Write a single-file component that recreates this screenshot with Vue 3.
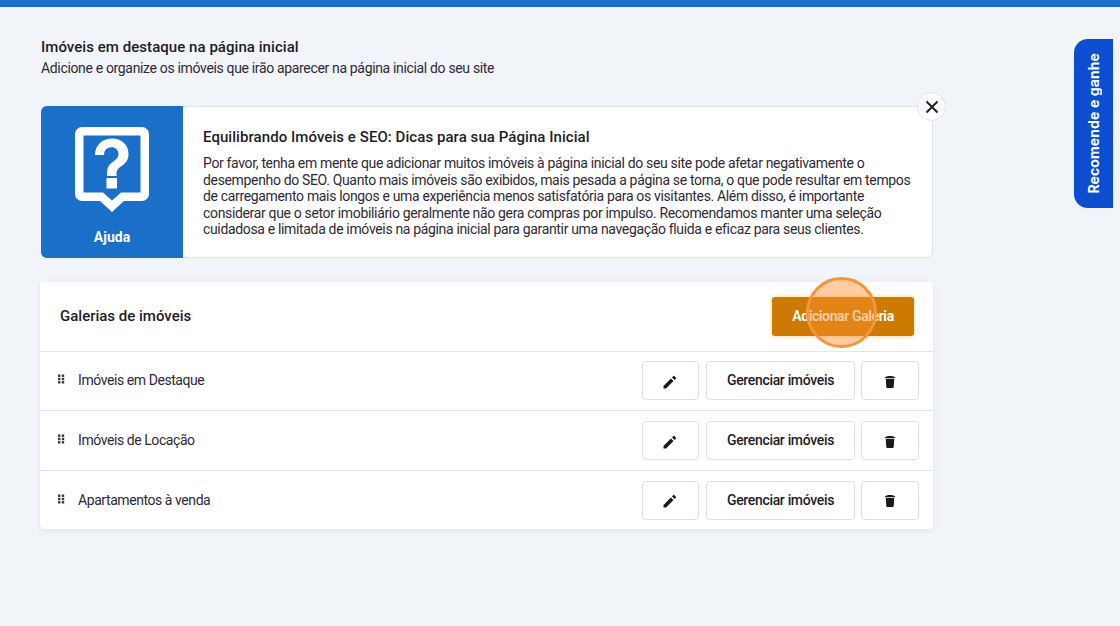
<template>
  <div class="page">
    <div class="topbar"></div>
    <main class="content">
      <h1 class="title">Imóveis em destaque na página inicial</h1>
      <p class="subtitle">Adicione e organize os imóveis que irão aparecer na página inicial do seu site</p>

      <section class="help">
        <div class="help-side">
          <svg class="help-icon" width="74" height="86" viewBox="0 0 74 86">
            <path fill="#fff" fill-rule="evenodd" d="M7 0h60a7 7 0 0 1 7 7v60a7 7 0 0 1-7 7H49L37 85 25 74H7a7 7 0 0 1-7-7V7a7 7 0 0 1 7-7zM8.500 8.500v57h19.500L37 73.500 46 65.500h19.500v-57z"/>
            <path fill="#fff" d="M20 28c0-10 7.500-16.500 17-16.500S53.500 17.500 53.500 27c0 6-3 9.500-7.500 12.500-3.500 2.400-4.500 4-4.500 8v1.500h-9.500V46c0-5.500 2-8.500 6-11.300 3.500-2.400 5.500-4 5.500-7.400 0-4.300-3-7-7-7-4.500 0-7.300 3-7.500 7.700zM31.500 51H42v10.500H31.500z"/>
          </svg>
          <span class="help-label">Ajuda</span>
        </div>
        <div class="help-body">
          <h2 class="help-title">Equilibrando Imóveis e SEO: Dicas para sua Página Inicial</h2>
          <p class="help-text">Por favor, tenha em mente que adicionar muitos imóveis à página inicial do seu site pode afetar negativamente o desempenho do SEO. Quanto mais imóveis são exibidos, mais pesada a página se torna, o que pode resultar em tempos de carregamento mais longos e uma experiência menos satisfatória para os visitantes. Além disso, é importante considerar que o setor imobiliário geralmente não gera compras por impulso. Recomendamos manter uma seleção cuidadosa e limitada de imóveis na página inicial para garantir uma navegação fluida e eficaz para seus clientes.</p>
        </div>
        <button class="close" aria-label="Fechar">
          <svg width="14" height="14" viewBox="0 0 14 14"><path d="M1.500 1.500l11 11M12.500 1.500l-11 11" stroke="#221c26" stroke-width="2" fill="none"/></svg>
        </button>
      </section>

      <section class="galleries">
        <header class="galleries-head">
          <h2 class="galleries-title">Galerias de imóveis</h2>
          <button class="add">Adicionar Galeria</button>
          <span class="spot"></span>
        </header>
        <div v-for="item in galleries" :key="item" class="row">
          <svg class="grip" width="8" height="10" viewBox="0 0 8 10">
            <g fill="#3a3340">
              <rect x="1" y="0.500" width="2.400" height="2.400"/><rect x="4.800" y="0.500" width="2.400" height="2.400"/>
              <rect x="1" y="3.800" width="2.400" height="2.400"/><rect x="4.800" y="3.800" width="2.400" height="2.400"/>
              <rect x="1" y="7.100" width="2.400" height="2.400"/><rect x="4.800" y="7.100" width="2.400" height="2.400"/>
            </g>
          </svg>
          <span class="row-name">{{ item }}</span>
          <div class="actions">
            <button class="btn icon-btn" aria-label="Editar">
              <svg class="pencil" width="14" height="14" viewBox="0 0 14 14"><path fill="#1b1620" d="M0.500 10.900V13.500H3.100L10.500 6.100 7.900 3.500zM12.900 3.700a.7.7 0 0 0 0-1L11.300 1.100a.7.7 0 0 0-1 0L9 2.400 11.600 5z"/></svg>
            </button>
            <button class="btn manage">Gerenciar imóveis</button>
            <button class="btn icon-btn trash" aria-label="Excluir">
              <svg class="bin" width="10" height="12" viewBox="0 0 10 12"><path fill="#1b1620" d="M.8 3h8.400l-.5 8a1.100 1.100 0 0 1-1.100 1H2.400a1.100 1.100 0 0 1-1.100-1zM0 1.200C1.500.5 3 0 5 0s3.500.5 5 1.200V2.300H0z"/></svg>
            </button>
          </div>
        </div>
      </section>
    </main>
    <aside class="refer"><span>Recomende e ganhe</span></aside>
  </div>
</template>

<script setup>
const galleries = ['Imóveis em Destaque', 'Imóveis de Locação', 'Apartamentos à venda']
</script>

<style>
html, body { margin: 0; background: #f1f4f9; }
</style>

<style scoped>
.page {
  position: relative;
  height: 626px;
  overflow: hidden;
  background: #f1f4f9;
  font-family: Roboto, "Liberation Sans", sans-serif;
  color: #221c26;
}
.topbar { height: 7px; background: #1a6fc9; }
.content { width: 893px; padding: 31px 0 0 40px; }
.title { margin: 0 0 0 1px; font-size: 15px; line-height: 18px; font-weight: 500; letter-spacing: 0.05px; }
.subtitle { margin: 3px 0 0 1px; font-size: 14px; line-height: 18px; letter-spacing: -0.34px; color: #2f2935; }

.help {
  position: relative;
  display: flex;
  height: 152px;
  margin: 29px 0 0 1px;
  box-sizing: border-box;
  background: #fff;
  border: 1px solid #dfe4ee;
  border-radius: 6px;
}
.help-side {
  flex: 0 0 142px;
  margin: -1px 0 -1px -1px;
  display: flex;
  flex-direction: column;
  align-items: center;
  background: #1a6fc9;
  border-radius: 6px 0 0 6px;
  color: #fff;
}
.help-icon { margin-top: 21px; }
.help-label { margin-top: 15px; font-size: 14px; line-height: 18px; font-weight: 700; }
.help-body { padding: 21px 16px 0 20px; }
.help-title { margin: 0; font-size: 15px; line-height: 18px; font-weight: 500; letter-spacing: 0.06px; }
.help-text { margin: 9px 0 0; font-size: 14px; line-height: 16.600px; letter-spacing: -0.34px; color: #2f2935; }
.close {
  position: absolute;
  top: -15px;
  right: -14px;
  width: 29px;
  height: 29px;
  padding: 0;
  display: flex;
  align-items: center;
  justify-content: center;
  background: #fff;
  border: 1px solid #dfe4ee;
  border-radius: 50%;
}

.galleries {
  margin-top: 24px;
  background: #fff;
  border-radius: 4px;
  box-shadow: 0 2px 6px rgba(120, 135, 165, 0.1);
}
.galleries-head {
  position: relative;
  display: flex;
  align-items: center;
  justify-content: space-between;
  height: 68.700px;
  padding: 0 19px 0 20px;
}
.galleries-title { margin: 0; font-size: 15px; font-weight: 500; letter-spacing: 0; }
.add {
  width: 142px;
  height: 39px;
  padding: 0 0 1px;
  background: #cc7a00;
  border: 0;
  border-radius: 3px;
  box-shadow: 0 0 5px rgba(255, 180, 60, 0.6);
  color: #fff;
  font: 600 14px Roboto, sans-serif;
  letter-spacing: -0.38px;
}
.spot {
  position: absolute;
  top: -5px;
  left: 766px;
  width: 65px;
  height: 65px;
  background: rgba(255, 145, 50, 0.45);
  border: 3px solid #f6943c;
  border-radius: 50%;
}
.row {
  display: flex;
  align-items: center;
  height: 59.600px;
  padding: 0 14px 0 17px;
  border-top: 1px solid #e1e5ee;
  box-sizing: border-box;
}
.grip { margin-top: -3px; }
.row-name { margin-left: 13px; margin-top: -1px; font-size: 14px; letter-spacing: -0.43px; color: #2f2935; }
.actions { display: flex; gap: 7px; margin-left: auto; }
.btn {
  height: 39px;
  padding: 0 0 1px;
  display: flex;
  align-items: center;
  justify-content: center;
  background: #fff;
  border: 1px solid #d9dfeb;
  border-radius: 4px;
  color: #221c26;
  font: 500 14px Roboto, sans-serif;
  letter-spacing: -0.33px;
}
.icon-btn { width: 57px; }
.manage { width: 149px; }
.trash { width: 58px; margin-left: -1px; }
.pencil { margin: 3px 1px 0 0; }
.bin { margin-top: 3px; }

.refer {
  position: absolute;
  top: 39px;
  left: 1074px;
  width: 39px;
  height: 169px;
  display: flex;
  align-items: center;
  justify-content: center;
  background: #0b4fd0;
  border-radius: 14px 0 0 14px;
}
.refer span {
  writing-mode: vertical-rl;
  transform: rotate(180deg);
  color: #fff;
  font: 700 14px Inter, sans-serif;
  letter-spacing: 0.1px;
}
</style>
